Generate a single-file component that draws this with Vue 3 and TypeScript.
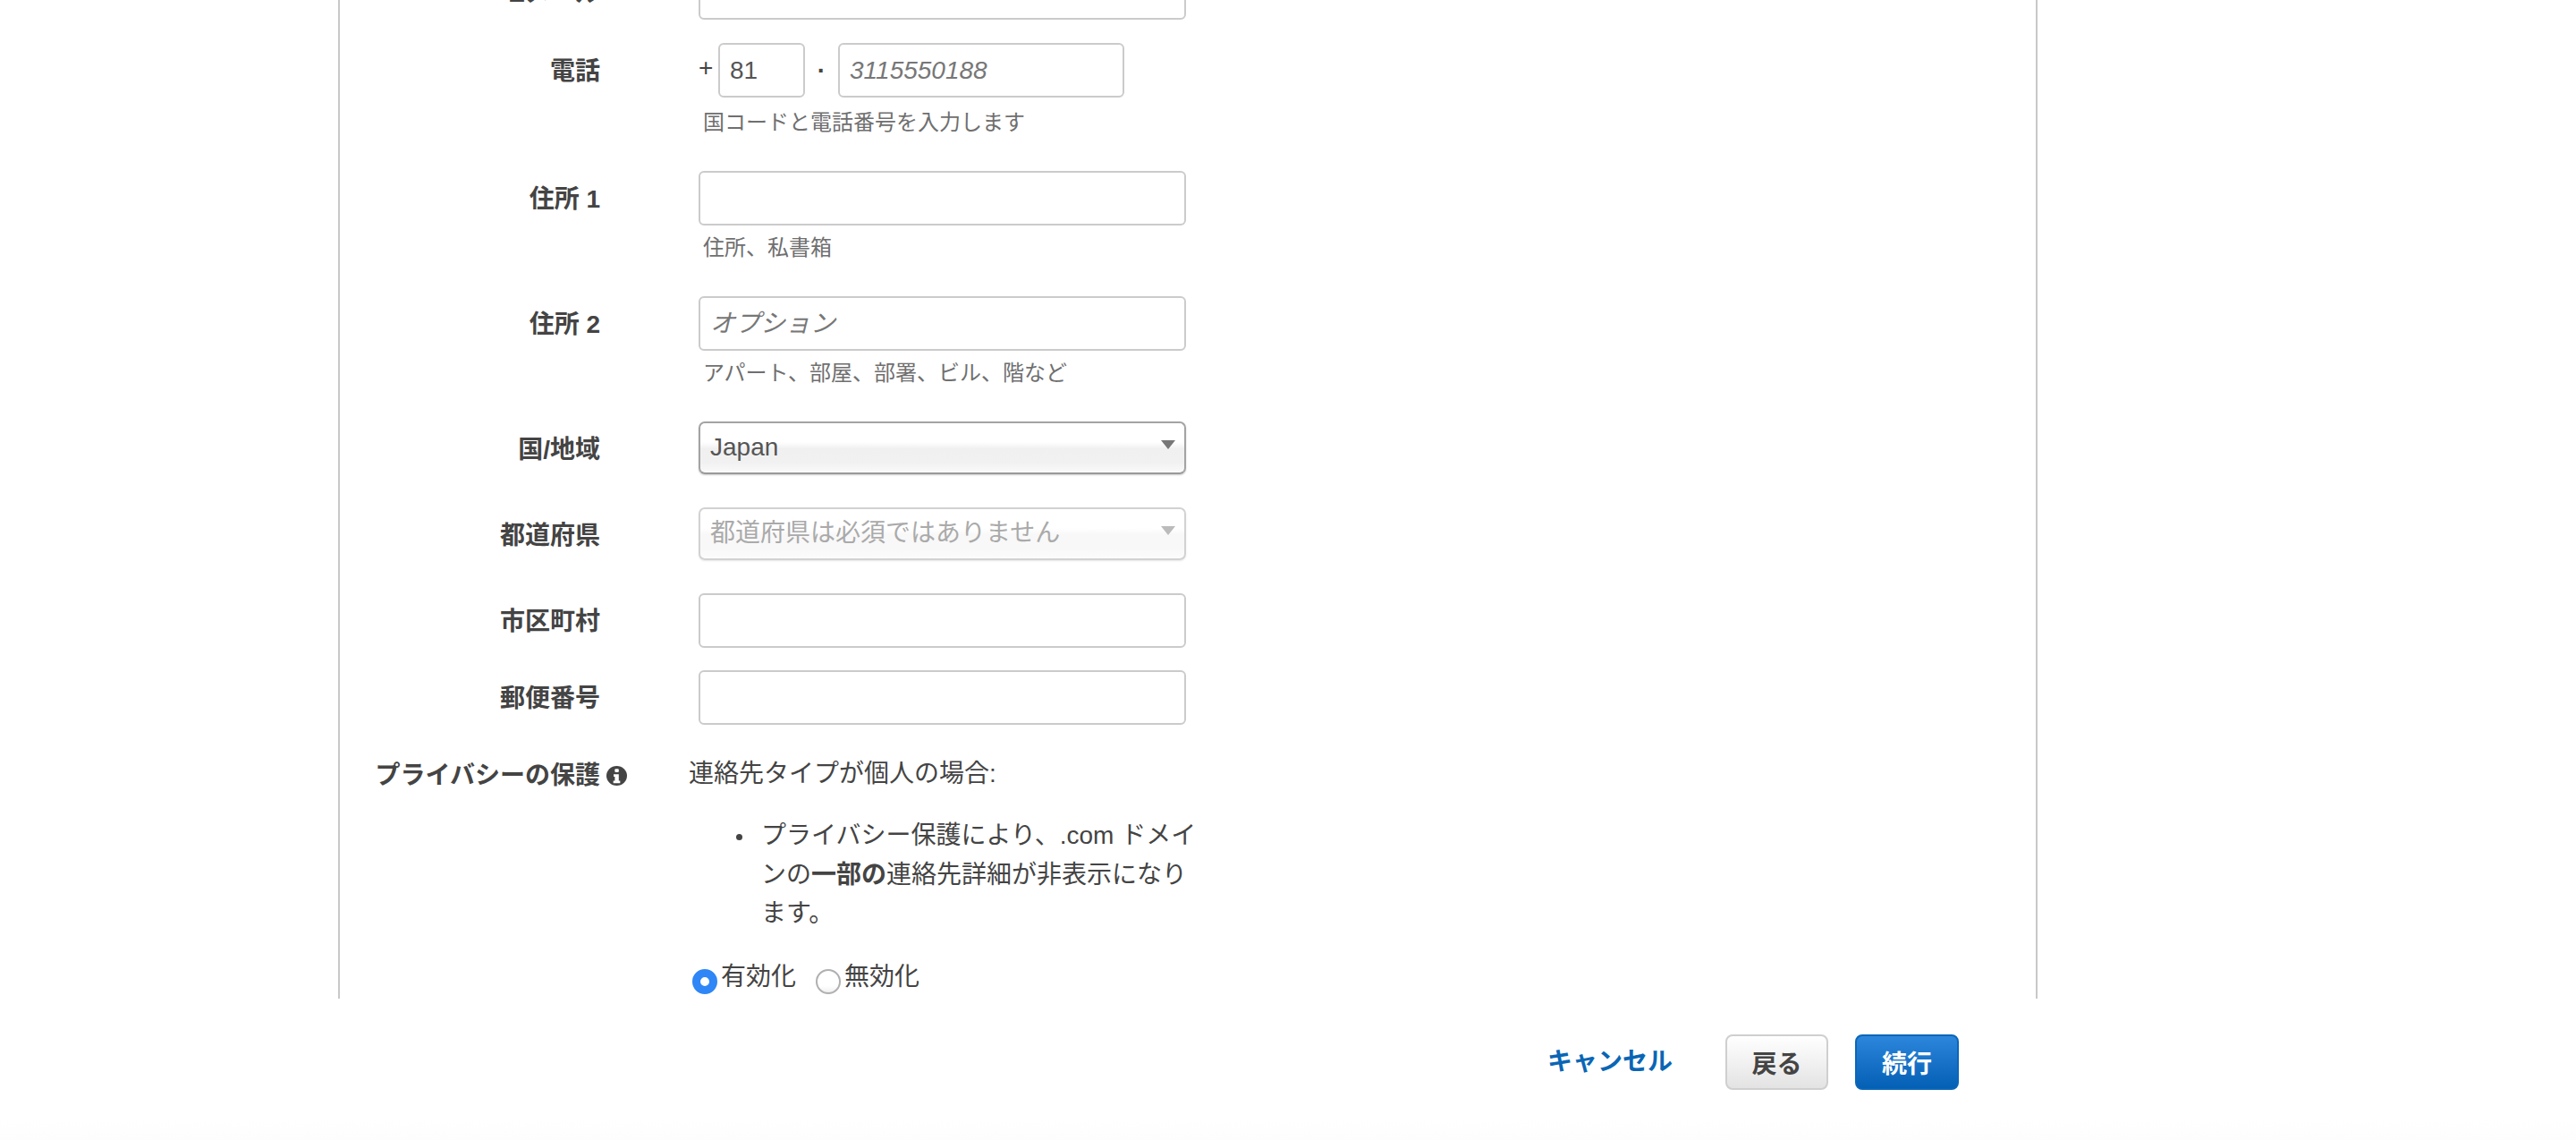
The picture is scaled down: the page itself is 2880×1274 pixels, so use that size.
<script setup lang="ts">
interface Row {
  label: string
  placeholder?: string
  hint?: string
}
const addressRows: Row[] = [
  { label: '住所 1', hint: '住所、私書箱' },
  { label: '住所 2', placeholder: 'オプション', hint: 'アパート、部屋、部署、ビル、階など' },
]
</script>

<template>
  <div class="page">
    <div class="scroller">
      <div class="card">
        <div class="row first gap-m">
          <label class="label">Eメール</label>
          <div class="field"><input class="input wide" type="text" /></div>
        </div>

        <div class="row gap-l">
          <label class="label">電話</label>
          <div class="field">
            <div class="phone">
              <span class="plus">+</span>
              <input class="input code" type="text" value="81" />
              <span class="dot">·</span>
              <input class="input number" type="text" placeholder="3115550188" />
            </div>
            <p class="hint phone-hint">国コードと電話番号を入力します</p>
          </div>
        </div>

        <div v-for="r in addressRows" :key="r.label" class="row gap-l">
          <label class="label">{{ r.label }}</label>
          <div class="field">
            <input class="input wide" type="text" :placeholder="r.placeholder" />
            <p class="hint">{{ r.hint }}</p>
          </div>
        </div>

        <div class="row gap-s">
          <label class="label select-label">国/地域</label>
          <div class="field">
            <div class="select">
              <span>Japan</span>
              <i class="arrow"></i>
            </div>
          </div>
        </div>

        <div class="row gap-s">
          <label class="label select-label">都道府県</label>
          <div class="field">
            <div class="select disabled">
              <span>都道府県は必須ではありません</span>
              <i class="arrow"></i>
            </div>
          </div>
        </div>

        <div class="row gap-c">
          <label class="label">市区町村</label>
          <div class="field"><input class="input wide" type="text" /></div>
        </div>

        <div class="row gap-p">
          <label class="label">郵便番号</label>
          <div class="field"><input class="input wide" type="text" /></div>
        </div>

        <div class="row privacy">
          <label class="label privacy-label">
            プライバシーの保護
            <svg class="info" viewBox="0 0 24 24" preserveAspectRatio="none" aria-hidden="true">
              <circle cx="12" cy="12" r="12" fill="#444" />
              <rect x="9.8" y="3.6" width="4.6" height="4" rx="1" fill="#fff" />
              <path d="M8.4 10h6v8h1.6v3H8v-3h1.8v-5H8.4z" fill="#fff" />
            </svg>
          </label>
          <div class="privacy-body">
            <p class="lead">連絡先タイプが個人の場合:</p>
            <ul class="list">
              <li>プライバシー保護により、.com ドメインの<b>一部の</b>連絡先詳細が非表示になります。</li>
            </ul>
            <div class="radios">
              <span class="radio on"></span><span class="radio-text">有効化</span>
              <span class="radio second"></span><span class="radio-text">無効化</span>
            </div>
          </div>
        </div>
      </div>
    </div>

    <div class="footer">
      <a class="cancel">キャンセル</a>
      <button class="btn back" type="button">戻る</button>
      <button class="btn next" type="button">続行</button>
    </div>
  </div>
</template>

<style scoped>
.page {
  width: 2880px;
  height: 1274px;
  overflow: hidden;
  display: flex;
  flex-direction: column;
  font-family: "Liberation Sans", "Noto Sans CJK JP", sans-serif;
  font-size: 28px;
  color: #444;
  background: #fff;
}
.scroller {
  height: 1116px;
  overflow: hidden;
  flex: none;
}
.card {
  display: flow-root;
  margin-left: 378px;
  width: 1900px;
  height: 1116px;
  box-sizing: border-box;
  border-left: 2px solid #c8c8c8;
  border-right: 2px solid #c8c8c8;
}
.row {
  display: flex;
  align-items: flex-start;
}
.first {
  margin-top: -39px;
}
.gap-l {
  margin-bottom: 39px;
}
.gap-s {
  margin-bottom: 37px;
}
.gap-m {
  margin-bottom: 26px;
}
.gap-c {
  margin-bottom: 25px;
}
.gap-p {
  margin-bottom: 33px;
}
.label {
  flex: none;
  width: 291px;
  margin-right: 110px;
  margin-bottom: -2px;
  text-align: right;
  font-weight: 700;
  line-height: 63px;
  white-space: nowrap;
  color: #444;
}
.select-label {
  margin-bottom: -4px;
}
.field {
  width: 545px;
}
.input {
  display: block;
  box-sizing: border-box;
  height: 61px;
  padding: 0 11px;
  border: 2px solid #cbcbcb;
  border-radius: 6px;
  background: #fff;
  font: inherit;
  color: #555;
  outline: none;
}
.input::placeholder {
  font-style: italic;
  color: #777;
  opacity: 1;
}
.wide {
  width: 545px;
}
.phone {
  display: flex;
  align-items: flex-start;
}
.plus {
  width: 22px;
  line-height: 56px;
  flex: none;
}
.dot {
  width: 37px;
  text-align: center;
  font-weight: 700;
  line-height: 61px;
  flex: none;
}
.code {
  width: 97px;
}
.number {
  width: 320px;
}
.hint {
  margin: 10px 0 0 5px;
  font-size: 24px;
  line-height: 30px;
  color: #6f6f6f;
}
.phone-hint {
  margin-top: 13px;
}
.select {
  position: relative;
  box-sizing: border-box;
  width: 545px;
  height: 59px;
  padding: 0 11px;
  border: 2px solid #a3a3a3;
  border-bottom-color: #999;
  border-radius: 7px;
  line-height: 54px;
  color: #555;
  background: linear-gradient(to bottom, #fff 0, #fff 38%, #f0f0f0 52%, #f1f1f1 80%, #fafafa 100%);
  box-shadow: 0 1px 2px rgba(0, 0, 0, 0.2);
}
.arrow {
  position: absolute;
  right: 10px;
  top: 19px;
  width: 0;
  height: 0;
  border-left: 8px solid transparent;
  border-right: 8px solid transparent;
  border-top: 10px solid #777;
}
.select.disabled {
  border-color: #d2d2d2;
  color: #aaa;
  background: linear-gradient(to bottom, #fff 0, #fff 38%, #f8f8f8 52%, #f8f8f8 80%, #fcfcfc 100%);
  box-shadow: 0 1px 2px rgba(0, 0, 0, 0.1);
}
.select.disabled .arrow {
  border-top-color: #bbb;
}
.privacy-label {
  line-height: 48px;
  margin-right: 99px;
  position: relative;
}
.info {
  position: absolute;
  left: 298px;
  top: 13px;
  width: 23px;
  height: 22px;
}
.privacy-body {
  width: 580px;
}
.lead {
  margin: 0;
  line-height: 43px;
}
.list {
  margin: 26px 0 0;
  padding: 0 0 0 81px;
  width: 490px;
  line-height: 43.5px;
  list-style: none;
}
.list li {
  position: relative;
}
.list li::before {
  content: "";
  position: absolute;
  left: -28px;
  top: 20px;
  width: 7px;
  height: 7px;
  border-radius: 50%;
  background: #444;
}
.list b {
  font-weight: 700;
}
.radios {
  display: flex;
  align-items: flex-start;
  margin: 27px 0 0 4px;
  line-height: 43px;
}
.radio {
  flex: none;
  box-sizing: border-box;
  width: 28px;
  height: 28px;
  margin-top: 13px;
  margin-right: 4px;
  border-radius: 50%;
  border: 2px solid #b0b0b0;
  background: linear-gradient(to bottom, #fff, #fff 70%, #f0f0f0);
}
.radio.on {
  border: 9px solid #2f86f6;
  background: #fff;
}
.radio.second {
  margin-left: 22px;
}
.footer {
  flex: 1;
  box-sizing: border-box;
  display: flex;
  justify-content: flex-end;
  align-items: flex-start;
  padding: 40px 690px 0 0;
  background: linear-gradient(to bottom, #fff 0, #fff 85%, #fdfdfd 100%);
}
.cancel {
  font-weight: 700;
  line-height: 62px;
  color: #0a66b5;
  margin-right: 59px;
}
.btn {
  box-sizing: border-box;
  width: 115px;
  height: 62px;
  padding: 0;
  border-radius: 8px;
  font: inherit;
  font-weight: 700;
}
.back {
  border: 2px solid #cfcfcf;
  color: #444;
  background: linear-gradient(to bottom, #fff, #e3e3e3);
  margin-right: 30px;
}
.next {
  width: 116px;
  border: 2px solid #0b66b8;
  color: #fff;
  background: linear-gradient(to bottom, #2c86dc, #0460b4);
}
</style>

<style>
html,
body {
  margin: 0;
  background: #fff;
}
</style>
